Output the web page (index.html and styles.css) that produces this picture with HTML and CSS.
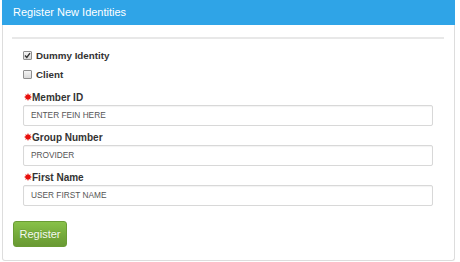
FILE: index.html
```html
<!DOCTYPE html>
<html>
<head>
<meta charset="utf-8">
<link rel="stylesheet" href="styles.css">
</head>
<body>
<div class="page">
  <div class="panel">
    <div class="panel-heading">Register New Identities</div>
    <div class="panel-body">
      <div class="divider"></div>
      <div class="fields">
        <label class="check-row">
          <span class="box">
            <svg width="7" height="7" viewBox="0 0 7 7"><path d="M1 3.6 L2.8 5.4 L6 1.2" fill="none" stroke="#333" stroke-width="1.4"/></svg>
          </span>
          <span>Dummy Identity</span>
        </label>
        <label class="check-row">
          <span class="box"></span>
          <span>Client</span>
        </label>
        <div class="field">
          <div class="field-label"><svg class="req" width="8" height="8" viewBox="-4 -4 8 8"><polygon fill="#e8100c" points="0,-4 0.9,-2.1 2.8,-2.8 2.1,-0.9 4,0 2.1,0.9 2.8,2.8 0.9,2.1 0,4 -0.9,2.1 -2.8,2.8 -2.1,0.9 -4,0 -2.1,-0.9 -2.8,-2.8 -0.9,-2.1"/></svg>Member ID</div>
          <div class="input">ENTER FEIN HERE</div>
        </div>
        <div class="field">
          <div class="field-label"><svg class="req" width="8" height="8" viewBox="-4 -4 8 8"><polygon fill="#e8100c" points="0,-4 0.9,-2.1 2.8,-2.8 2.1,-0.9 4,0 2.1,0.9 2.8,2.8 0.9,2.1 0,4 -0.9,2.1 -2.8,2.8 -2.1,0.9 -4,0 -2.1,-0.9 -2.8,-2.8 -0.9,-2.1"/></svg>Group Number</div>
          <div class="input">PROVIDER</div>
        </div>
        <div class="field">
          <div class="field-label"><svg class="req" width="8" height="8" viewBox="-4 -4 8 8"><polygon fill="#e8100c" points="0,-4 0.9,-2.1 2.8,-2.8 2.1,-0.9 4,0 2.1,0.9 2.8,2.8 0.9,2.1 0,4 -0.9,2.1 -2.8,2.8 -2.1,0.9 -4,0 -2.1,-0.9 -2.8,-2.8 -0.9,-2.1"/></svg>First Name</div>
          <div class="input">USER FIRST NAME</div>
        </div>
      </div>
      <button class="btn">Register</button>
    </div>
  </div>
</div>
</body>
</html>
```

FILE: styles.css
```css
html, body {
  margin: 0;
  padding: 0;
  background: #ffffff;
  font-family: "Liberation Sans", Arial, sans-serif;
  color: #333333;
}
.page {
  padding-left: 2px;
}
.panel {
  width: 451px;
  border: 1px solid #dddddd;
  border-top: none;
  border-radius: 0 0 3px 3px;
  background: #ffffff;
}
.panel-heading {
  height: 25px;
  line-height: 25px;
  margin: 0 -1px;
  padding-left: 11px;
  background: #2fa4e7;
  color: #ffffff;
  font-size: 11px;
}
.panel-body {
  padding: 12px 10px 13px 10px;
}
.divider {
  height: 2px;
  background: #e8e8e8;
  margin-left: -1px;
}
.fields {
  display: flex;
  flex-direction: column;
  margin: 7px 11px 0 10px;
}
.check-row {
  display: flex;
  align-items: center;
  gap: 4px;
  height: 19px;
  font-size: 9.8px;
  font-weight: bold;
}
.box {
  width: 7px;
  height: 7px;
  border: 1px solid #8f8f8f;
  border-radius: 1px;
  background: linear-gradient(#f4f4f4, #d9d9d9);
  display: flex;
  align-items: center;
  justify-content: center;
}
.field {
  display: flex;
  flex-direction: column;
  margin-top: 7px;
}
.field + .field {
  margin-top: 5px;
}
.field-label {
  display: flex;
  align-items: center;
  height: 13px;
  font-size: 10px;
  font-weight: bold;
  margin-bottom: 1px;
}
.req {
  margin: 0 0 1px 1px;
}
.input {
  height: 19px;
  line-height: 19px;
  border: 1px solid #d8d8d8;
  border-radius: 2px;
  padding-left: 7px;
  font-size: 8.3px;
  color: #555555;
  box-shadow: inset 0 1px 1px rgba(0,0,0,0.05);
}
.btn {
  display: block;
  margin-top: 15px;
  width: 54px;
  height: 26px;
  padding: 0;
  border: 1px solid #6a9c34;
  border-radius: 3px;
  background: linear-gradient(#88c149, #73a839 60%, #699934);
  color: #f4f9ee;
  font-family: "Liberation Sans", Arial, sans-serif;
  font-size: 11px;
  text-shadow: 0 -1px 0 rgba(0,0,0,0.1);
}
```
